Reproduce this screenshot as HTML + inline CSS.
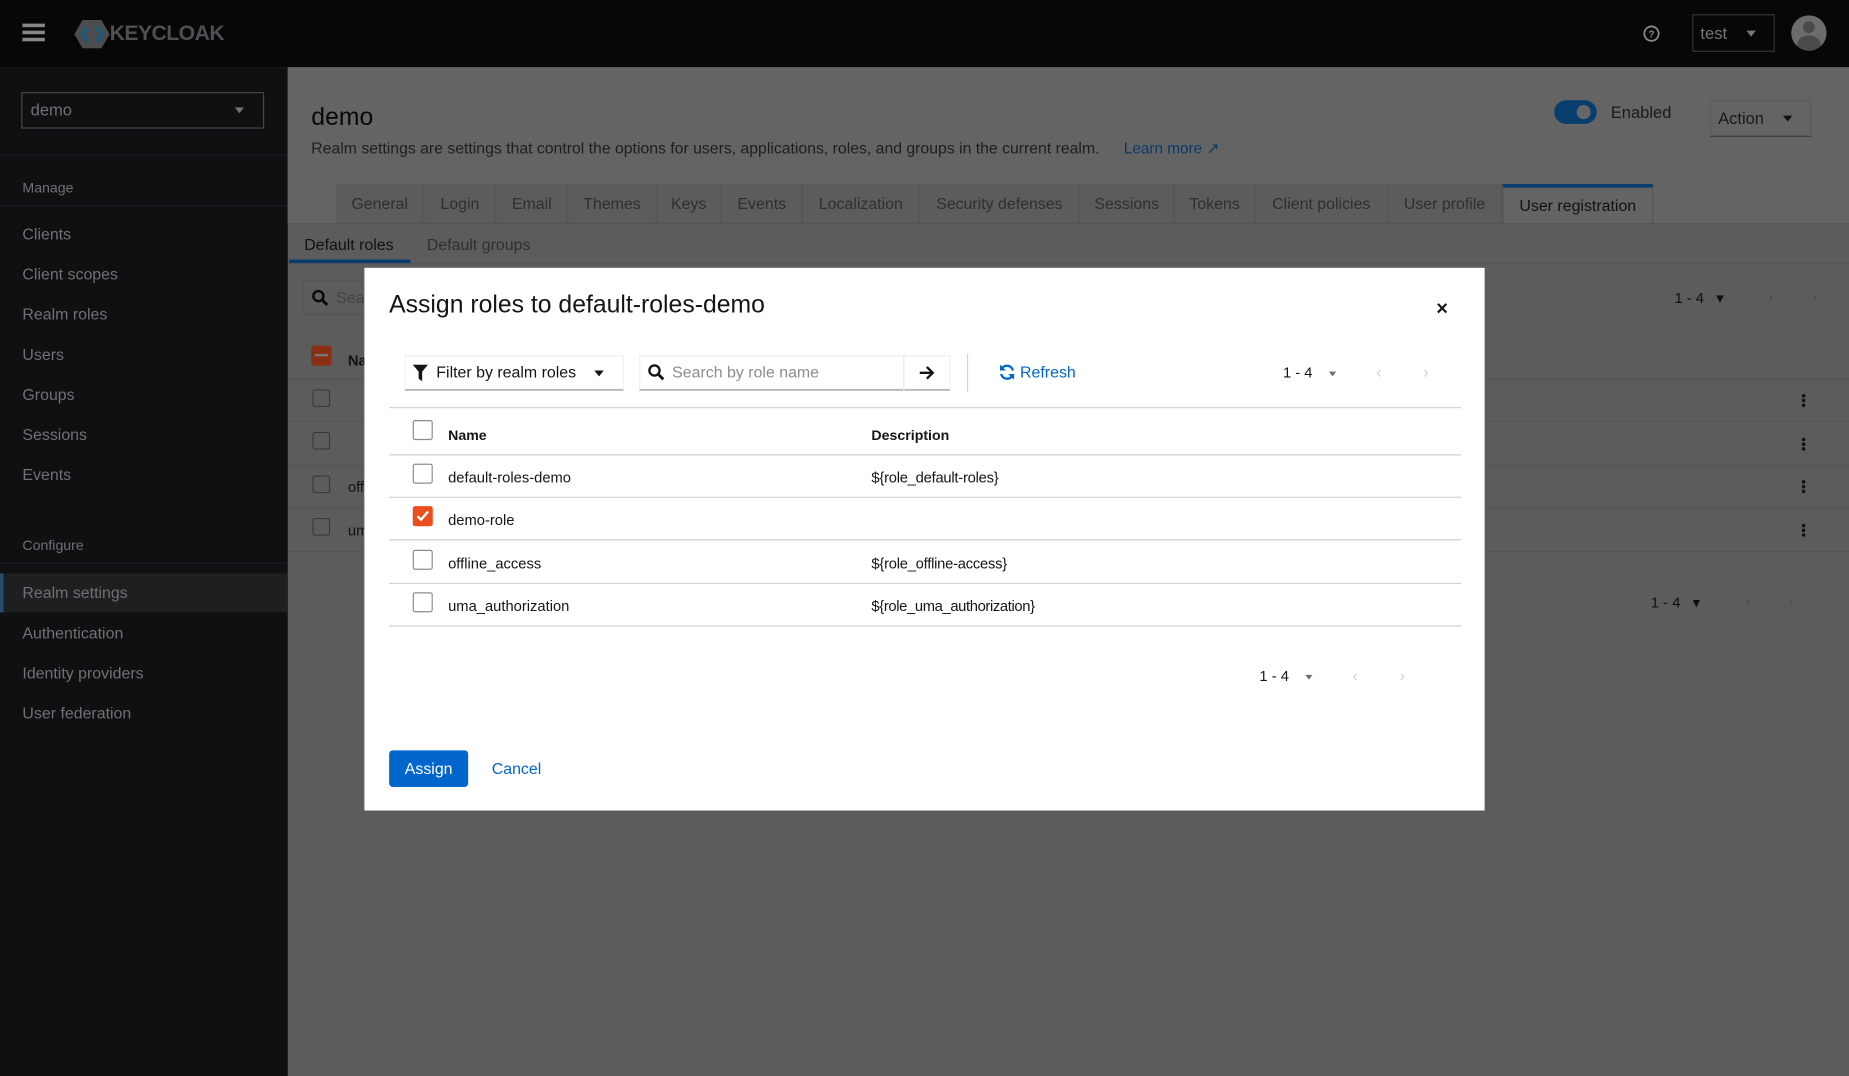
<!DOCTYPE html>
<html><head><meta charset="utf-8"><style>
*{box-sizing:border-box;margin:0;padding:0}
html,body{width:1849px;height:1076px;overflow:hidden;background:#5c5c5c;font-family:"Liberation Sans",sans-serif}
#w{position:absolute;left:0;top:0;width:1568px;height:912px;transform:scale(1.17921,1.17982);transform-origin:0 0;background:#5c5c5c}
.a{position:absolute;white-space:nowrap}
.top{left:0;top:0;width:1568px;height:57px;background:#070708}
.side{left:0;top:57px;width:244px;height:855px;background:#0f1012}
.nav{left:19px;font-size:13.5px;color:#707174}
.hdr{left:244px;top:57px;width:1324px;height:133px;background:#646464}
.tab{top:156px;height:34px;font-size:13.5px;color:#2f2f2f;background:#5c5c5c;border-right:1px solid #555;text-align:center;line-height:34px}
.cb{width:17px;height:17px;border:1.5px solid #8a8d90;border-radius:2px;background:#fff}
.bcb{width:15px;height:15px;border:1.5px solid #3a3a3a;border-radius:2px}
.m{left:309px;top:227px;width:950px;height:460px;background:#fff}
.t{font-size:12.5px;color:#151515}
.hl{height:1px;background:#d2d2d2}
</style></head><body><div id="w">
<div class="a top"></div>
<div class="a" style="left:19px;top:20px;width:19px;height:3px;background:#888;box-shadow:0 6px 0 #888,0 12px 0 #888"></div>
<svg class="a" style="left:63px;top:17px" width="30" height="24" viewBox="0 0 30 24"><polygon points="7,0 23,0 30,12 23,24 7,24 0,12" fill="#4a4c4f"/><path d="M11 6 L7 12 L11 18 M19 6 L23 12 L19 18" stroke="#1c5a7a" stroke-width="3" fill="none"/></svg>
<div class="a" style="left:93px;top:18px;font-size:18px;font-weight:bold;color:#4e4f52;letter-spacing:-0.5px">KEYCLOAK</div>
<svg class="a" style="left:1393px;top:21px" width="15" height="15" viewBox="0 0 16 16"><circle cx="8" cy="8" r="6.5" stroke="#888" stroke-width="1.6" fill="none"/><text x="8" y="11.5" font-size="9" font-weight="bold" fill="#888" text-anchor="middle" font-family="Liberation Sans">?</text></svg>
<div class="a" style="left:1435px;top:12px;width:70px;height:32px;border:1px solid #333"></div>
<div class="a" style="left:1442px;top:20px;font-size:14px;color:#777">test</div>
<div class="a" style="left:1481px;top:26px;border:4px solid transparent;border-top:5px solid #777"></div>
<div class="a" style="left:1519px;top:13px;width:30px;height:30px;border-radius:50%;background:#6c6c6c;overflow:hidden"><div style="position:absolute;left:10px;top:5px;width:10px;height:10px;border-radius:50%;background:#4a4a4a"></div><div style="position:absolute;left:5px;top:17px;width:20px;height:16px;border-radius:50%;background:#4a4a4a"></div></div>

<div class="a side"></div>
<div class="a" style="left:18px;top:78px;width:206px;height:31px;border:1px solid #47484a"></div>
<div class="a" style="left:26px;top:85px;font-size:14px;color:#6f7073">demo</div>
<div class="a" style="left:199px;top:91px;border:4px solid transparent;border-top:5px solid #6f7073"></div>
<div class="a" style="left:0;top:131px;width:244px;height:1px;background:#1c1d20"></div>
<div class="a nav" style="top:152px;font-size:12px">Manage</div>
<div class="a" style="left:0;top:174px;width:244px;height:1px;background:#1c1d20"></div>
<div class="a nav" style="top:191px">Clients</div>
<div class="a nav" style="top:225px">Client scopes</div>
<div class="a nav" style="top:259px">Realm roles</div>
<div class="a nav" style="top:293px">Users</div>
<div class="a nav" style="top:327px">Groups</div>
<div class="a nav" style="top:361px">Sessions</div>
<div class="a nav" style="top:395px">Events</div>
<div class="a nav" style="top:455px;font-size:12px">Configure</div>
<div class="a" style="left:0;top:477px;width:244px;height:1px;background:#1c1d20"></div>
<div class="a" style="left:0;top:486px;width:244px;height:33px;background:#1e1f21;border-left:3px solid #2b4b6e"></div>
<div class="a nav" style="top:495px">Realm settings</div>
<div class="a nav" style="top:529px">Authentication</div>
<div class="a nav" style="top:563px">Identity providers</div>
<div class="a nav" style="top:597px">User federation</div>

<div class="a hdr"></div>
<div class="a" style="left:264px;top:88px;font-size:21px;color:#080808">demo</div>
<div class="a" style="left:264px;top:118px;font-size:13.4px;color:#1e1e1e">Realm settings are settings that control the options for users, applications, roles, and groups in the current realm.</div>
<div class="a" style="left:953px;top:118px;font-size:13px;color:#0b3a6a">Learn more ↗</div>
<div class="a" style="left:1318px;top:85px;width:36px;height:20px;border-radius:10px;background:#073d6f"></div>
<div class="a" style="left:1337px;top:89px;width:12px;height:12px;border-radius:50%;background:#666"></div>
<div class="a" style="left:1366px;top:87px;font-size:14px;color:#1a1a1a">Enabled</div>
<div class="a" style="left:1450px;top:85px;width:86px;height:31px;border:1px solid #5a5a5a;border-bottom-color:#3b3b3b"></div>
<div class="a" style="left:1457px;top:92px;font-size:14px;color:#1a1a1a">Action</div>
<div class="a" style="left:1512px;top:98px;border:4px solid transparent;border-top:5px solid #111"></div>

<div class="a tab" style="left:285px;width:75px">General</div>
<div class="a tab" style="left:360px;width:61px">Login</div>
<div class="a tab" style="left:421px;width:61px">Email</div>
<div class="a tab" style="left:482px;width:75px">Themes</div>
<div class="a tab" style="left:557px;width:55px">Keys</div>
<div class="a tab" style="left:612px;width:69px">Events</div>
<div class="a tab" style="left:681px;width:99px">Localization</div>
<div class="a tab" style="left:780px;width:136px">Security defenses</div>
<div class="a tab" style="left:916px;width:80px">Sessions</div>
<div class="a tab" style="left:996px;width:69px">Tokens</div>
<div class="a tab" style="left:1065px;width:112px">Client policies</div>
<div class="a tab" style="left:1177px;width:97px">User profile</div>
<div class="a tab" style="left:1274px;width:128px;background:#646464;border-top:3px solid #073d6f;line-height:31px;color:#111;border-left:1px solid #555">User registration</div>
<div class="a" style="left:244px;top:189px;width:1324px;height:1px;background:#555"></div>
<div class="a" style="left:258px;top:200px;font-size:13.5px;color:#111">Default roles</div>
<div class="a" style="left:362px;top:200px;font-size:13.5px;color:#2f2f2f">Default groups</div>
<div class="a" style="left:245px;top:220px;width:103px;height:3px;background:#073d6f"></div>
<div class="a" style="left:244px;top:223px;width:1324px;height:1px;background:#555"></div>

<div class="a" style="left:257px;top:237px;width:60px;height:30px;border:1px solid #555"></div>
<svg class="a" style="left:264px;top:245px" width="15" height="15" viewBox="0 0 15 15"><circle cx="6" cy="6" r="4.3" stroke="#080808" stroke-width="2" fill="none"/><path d="M9 9l4.5 4.5" stroke="#080808" stroke-width="2.4"/></svg>
<div class="a" style="left:285px;top:245px;font-size:13.5px;color:#444">Sea</div>
<div class="a" style="left:1420px;top:245px;font-size:12.5px;color:#0f0f0f">1 - 4 &nbsp;&nbsp;▾</div>
<div class="a" style="left:1500px;top:244px;font-size:13px;color:#4c4c4c">‹ &nbsp;&nbsp;&nbsp;&nbsp;&nbsp;&nbsp;&nbsp;&nbsp;›</div>
<div class="a" style="left:264px;top:293px;width:17px;height:17px;background:#8a2f15;border-radius:2px"><div style="margin:7px 3px;height:2px;background:#777"></div></div>
<div class="a" style="left:295px;top:299px;font-size:12.5px;color:#111;font-weight:bold">Na</div>
<div class="a" style="left:244px;top:321px;width:1324px;height:1px;background:#555"></div>
<div class="a bcb" style="left:265px;top:330px"></div><div class="a" style="left:244px;top:357px;width:1324px;height:1px;background:#555"></div>
<div class="a bcb" style="left:265px;top:366px"></div><div class="a" style="left:244px;top:394px;width:1324px;height:1px;background:#555"></div>
<div class="a bcb" style="left:265px;top:403px"></div><div class="a" style="left:244px;top:430px;width:1324px;height:1px;background:#555"></div>
<div class="a bcb" style="left:265px;top:439px"></div><div class="a" style="left:244px;top:467px;width:1324px;height:1px;background:#555"></div>
<div class="a" style="left:295px;top:406px;font-size:12.5px;color:#111">off</div>
<div class="a" style="left:295px;top:443px;font-size:12.5px;color:#111">um</div>
<div class="a" style="left:1528px;top:334px;width:3px;height:3px;background:#111;border-radius:50%;box-shadow:0 4px 0 #111,0 8px 0 #111"></div>
<div class="a" style="left:1528px;top:371px;width:3px;height:3px;background:#111;border-radius:50%;box-shadow:0 4px 0 #111,0 8px 0 #111"></div>
<div class="a" style="left:1528px;top:407px;width:3px;height:3px;background:#111;border-radius:50%;box-shadow:0 4px 0 #111,0 8px 0 #111"></div>
<div class="a" style="left:1528px;top:444px;width:3px;height:3px;background:#111;border-radius:50%;box-shadow:0 4px 0 #111,0 8px 0 #111"></div>
<div class="a" style="left:1400px;top:503px;font-size:12.5px;color:#0f0f0f">1 - 4 &nbsp;&nbsp;▾</div>
<div class="a" style="left:1480px;top:502px;font-size:13px;color:#4c4c4c">‹ &nbsp;&nbsp;&nbsp;&nbsp;&nbsp;&nbsp;&nbsp;&nbsp;›</div>

<div class="a m"></div>
<div class="a" style="left:330px;top:247px;font-size:21px;color:#151515">Assign roles to default-roles-demo</div>
<div class="a" style="left:1218px;top:252px;font-size:17px;color:#151515;font-weight:bold">×</div>
<div class="a" style="left:343px;top:301px;width:186px;height:30px;border:1px solid #f0f0f0;border-bottom-color:#8a8d90"></div>
<svg class="a" style="left:350px;top:309px" width="13" height="14" viewBox="0 0 13 14"><path d="M0 0h13L8 6v8L5 12V6z" fill="#151515"/></svg>
<div class="a t" style="left:370px;top:308px;font-size:13.5px">Filter by realm roles</div>
<div class="a" style="left:504px;top:314px;border:4px solid transparent;border-top:5px solid #151515"></div>
<div class="a" style="left:542px;top:301px;width:264px;height:30px;border:1px solid #f0f0f0;border-bottom-color:#8a8d90"></div>
<div class="a" style="left:766px;top:301px;width:1px;height:30px;background:#e6e6e6"></div>
<svg class="a" style="left:549px;top:308px" width="15" height="15" viewBox="0 0 15 15"><circle cx="6" cy="6" r="4.3" stroke="#151515" stroke-width="2" fill="none"/><path d="M9 9l4.5 4.5" stroke="#151515" stroke-width="2.4"/></svg>
<div class="a" style="left:570px;top:308px;font-size:13.5px;color:#8a8d90">Search by role name</div>
<svg class="a" style="left:779px;top:309px" width="14" height="14" viewBox="0 0 14 14"><path d="M1 7h11M7 2l5 5-5 5" stroke="#151515" stroke-width="2" fill="none"/></svg>
<div class="a" style="left:820px;top:300px;width:1px;height:32px;background:#d2d2d2"></div>
<svg class="a" style="left:847px;top:308px" width="14" height="15" viewBox="0 0 14 15"><path d="M12 6A5.2 5.2 0 0 0 2.5 4.5M2 9a5.2 5.2 0 0 0 9.5 1.5" stroke="#06c" stroke-width="2" fill="none"/><path d="M1 1v5h5zM13 14V9H8z" fill="#06c"/></svg>
<div class="a" style="left:865px;top:308px;font-size:13.5px;color:#06c">Refresh</div>
<div class="a t" style="left:1088px;top:309px;font-size:12.5px">1 - 4</div>
<div class="a" style="left:1127px;top:315px;border:3.5px solid transparent;border-top:4.5px solid #6a6e73"></div>
<div class="a" style="left:1167px;top:307px;font-size:14px;color:#d2d2d2">‹</div>
<div class="a" style="left:1207px;top:307px;font-size:14px;color:#d2d2d2">›</div>

<div class="a hl" style="left:330px;top:345px;width:909px"></div>
<div class="a cb" style="left:350px;top:356px"></div>
<div class="a t" style="left:380px;top:362px;font-weight:bold;font-size:12px">Name</div>
<div class="a t" style="left:739px;top:362px;font-weight:bold;font-size:12px">Description</div>
<div class="a hl" style="left:330px;top:385px;width:909px"></div>
<div class="a cb" style="left:350px;top:393px"></div>
<div class="a t" style="left:380px;top:398px">default-roles-demo</div>
<div class="a t" style="left:739px;top:398px;letter-spacing:-0.2px">${role_default-roles}</div>
<div class="a hl" style="left:330px;top:421px;width:909px"></div>
<div class="a" style="left:350px;top:429px;width:17px;height:17px;background:#ec4d1e;border-radius:2px"><svg width="17" height="17" viewBox="0 0 17 17"><path d="M4 8.5l3 3 6-7" stroke="#fff" stroke-width="2" fill="none"/></svg></div>
<div class="a t" style="left:380px;top:434px">demo-role</div>
<div class="a hl" style="left:330px;top:457px;width:909px"></div>
<div class="a cb" style="left:350px;top:466px"></div>
<div class="a t" style="left:380px;top:471px">offline_access</div>
<div class="a t" style="left:739px;top:471px;letter-spacing:-0.2px">${role_offline-access}</div>
<div class="a hl" style="left:330px;top:494px;width:909px"></div>
<div class="a cb" style="left:350px;top:502px"></div>
<div class="a t" style="left:380px;top:507px">uma_authorization</div>
<div class="a t" style="left:739px;top:507px;letter-spacing:-0.3px">${role_uma_authorization}</div>
<div class="a hl" style="left:330px;top:530px;width:909px"></div>
<div class="a t" style="left:1068px;top:566px;font-size:12.5px">1 - 4</div>
<div class="a" style="left:1107px;top:572px;border:3.5px solid transparent;border-top:4.5px solid #6a6e73"></div>
<div class="a" style="left:1147px;top:564px;font-size:14px;color:#d2d2d2">‹</div>
<div class="a" style="left:1187px;top:564px;font-size:14px;color:#d2d2d2">›</div>
<div class="a" style="left:330px;top:636px;width:67px;height:31px;background:#06c;border-radius:3px;color:#fff;font-size:13.5px;text-align:center;line-height:31px">Assign</div>
<div class="a" style="left:417px;top:644px;font-size:13.5px;color:#06c">Cancel</div>
</div></body></html>
